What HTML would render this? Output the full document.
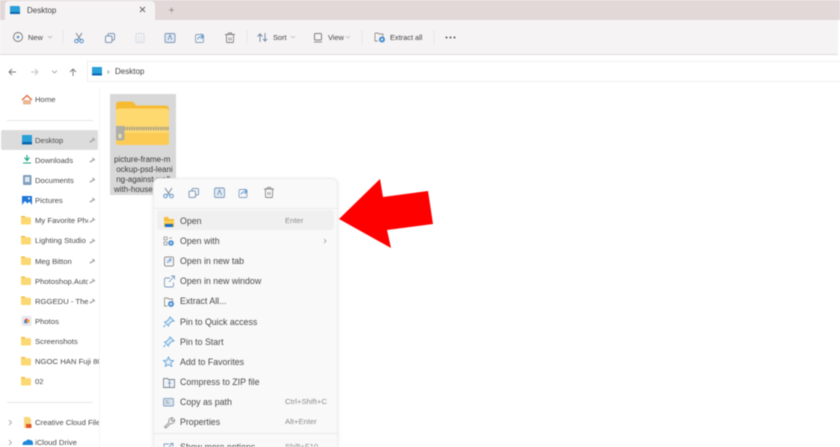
<!DOCTYPE html>
<html><head><meta charset="utf-8"><style>
html,body{margin:0;padding:0;width:840px;height:447px;overflow:hidden;background:#fff}
#w{position:relative;width:840px;height:447px;overflow:hidden;font-family:"Liberation Sans",sans-serif;color:#3a3a3a;filter:blur(.6px)}
.a{position:absolute}
.t{position:absolute;font-size:8.4px;line-height:12px;white-space:nowrap;color:#444}
.s{position:absolute;left:35px;width:53px;overflow:hidden;font-size:7.7px;line-height:12px;white-space:nowrap;color:#4a4a4a}
.m{position:absolute;left:180px;font-size:8.8px;line-height:12px;white-space:nowrap;color:#4a4a4a}
.k{position:absolute;font-size:7.7px;line-height:12px;white-space:nowrap;color:#8c8c8c}
svg{position:absolute;left:0;top:0}
</style></head><body><div id="w">
<div class="a" style="left:0;top:0;width:840px;height:20px;background:#e2d8d8"></div>
<div class="a" style="left:5px;top:1px;width:150px;height:20px;background:#f5f3f3;border-radius:4px 4px 0 0"></div>
<div class="a" style="left:0;top:20px;width:838px;height:34px;background:#f5f3f4;border-bottom:1px solid #e0dede"></div>
<div class="a" style="left:87px;top:61px;width:753px;height:21px;background:#fff;border-top:1px solid #eee;border-bottom:1px solid #eee;border-left:1px solid #eee;box-sizing:border-box"></div>
<div class="a" style="left:99px;top:88px;width:1px;height:359px;background:#f6f6f6"></div>
<div class="a" style="left:1px;top:130px;width:97px;height:20px;background:#dcdcdc;border-radius:2px"></div>
<div class="a" style="left:7px;top:120px;width:86px;height:1px;background:#e6e6e6"></div>
<div class="a" style="left:7px;top:402px;width:86px;height:1px;background:#e6e6e6"></div>
<div class="a" style="left:110px;top:94px;width:66px;height:101px;background:#d8d8d8"></div>

<div class="t" style="left:27px;top:5px;font-size:8px">Desktop</div>
<div class="t" style="left:28px;top:32px;font-size:7.4px">New</div>
<div class="t" style="left:273px;top:32px;font-size:7.4px">Sort</div>
<div class="t" style="left:328px;top:32px;font-size:7.4px">View</div>
<div class="t" style="left:390px;top:32px;font-size:7.4px">Extract all</div>
<div class="t" style="left:115px;top:66px;font-size:8px">Desktop</div>

<div class="s" style="top:94px">Home</div>
<div class="s" style="top:135px">Desktop</div>
<div class="s" style="top:155px">Downloads</div>
<div class="s" style="top:175px">Documents</div>
<div class="s" style="top:195px">Pictures</div>
<div class="s" style="top:215px">My Favorite Pho</div>
<div class="s" style="top:235px">Lighting Studio</div>
<div class="s" style="top:256px">Meg Bitton</div>
<div class="s" style="top:276px">Photoshop.Autc</div>
<div class="s" style="top:296px">RGGEDU - The N</div>
<div class="s" style="top:316px">Photos</div>
<div class="s" style="top:336px">Screenshots</div>
<div class="s" style="top:356px;width:64px">NGOC HAN Fuji 80</div>
<div class="s" style="top:376px">02</div>
<div class="s" style="top:417px;width:64px">Creative Cloud Files</div>
<div class="s" style="top:437px">iCloud Drive</div>

<div class="a" style="left:114px;top:155px;width:62px;font-size:8px;line-height:10px;color:#3a3a3a;white-space:nowrap">picture-frame-m<br>&nbsp;ockup-psd-leani<br>&nbsp;ng-against-wall<br>with-house-wall</div>

<svg width="840" height="447" viewBox="0 0 840 447" fill="none">
<defs>
<g id="pin"><path d="M-1.500 1.500L.5-.5M-.5-2L1.800.3M-1.700 .8L-3 2.300" stroke="#9a9a9a" stroke-width="1.200"/></g>
<g id="fold"><path d="M0 1Q0 0 1 0H3.500L4.800 1.300H9Q10 1.300 10 2.300V7.500Q10 8.500 9 8.500H1Q0 8.500 0 7.500Z" fill="#fcd873"/><path d="M0 1Q0 0 1 0H3.500L4.800 1.300H0Z" fill="#efb73a"/></g>
</defs>
<path d="M10 6h9l1 1v6H10z" fill="#2a9fd8"/><path d="M10 12h10v2H10z" fill="#0b66b0"/>
<path d="M140 7l5 5M145 7l-5 5" stroke="#666" stroke-width=".9"/>
<path d="M171.500 7.500v5M169 10h5" stroke="#888" stroke-width=".8"/>
<g opacity=".8">
<circle cx="18" cy="37" r="4.500" stroke="#555" stroke-width=".9"/><circle cx="18" cy="37" r="1.300" fill="#2c78c4"/>
<path d="M48 36l2 2 2-2" stroke="#999" stroke-width=".7"/>
<path d="M76 33l5 7.500M82 33l-5 7.500" stroke="#5b6b7c" stroke-width="1"/><circle cx="76.500" cy="41" r="1.800" stroke="#2c78c4"/><circle cx="81.500" cy="41" r="1.800" stroke="#2c78c4"/>
<rect x="108" y="33.500" width="6.500" height="6.500" rx="1.200" stroke="#5d7fa6"/><rect x="105.500" y="36" width="6.500" height="6.500" rx="1.200" fill="#f5f3f4" stroke="#5d7fa6"/>
<rect x="136" y="33.500" width="8" height="9" rx="1" stroke="#ccd4dc"/><rect x="138.500" y="36.500" width="3" height="4" stroke="#d5dce2" stroke-width=".7"/>
<rect x="165" y="33.500" width="10" height="9" rx="1.500" fill="#dbe6f2" stroke="#5d7fa6" stroke-width=".9"/><path d="M168 40l2-5 2 5" stroke="#3d6ea8" stroke-width=".8"/>
<rect x="195.500" y="34.500" width="8" height="8" rx="1.500" stroke="#6a8cb0" stroke-width=".9"/><path d="M197.500 39.500q1-3 5-3M201 34l2.500 2.500L201 39" stroke="#2c78c4" stroke-width=".9"/>
<path d="M225 34.500h10M226.500 35v6.500q0 1 1 1h5q1 0 1-1V35M228 34l.5-1h3l.5 1M229 37.500v3M231 37.500v3" stroke="#666" stroke-width=".9"/>
<path d="M260 42v-8l-2.500 2.500M260 34l2.500 2.500M265 33v8l-2 -2M265 41l2-2" stroke="#4e6c8c" stroke-width=".9"/>
<path d="M291 36l2 2 2-2M346 36l2 2 2-2" stroke="#aaa" stroke-width=".7"/>
<rect x="314.500" y="33.500" width="7" height="6.500" rx="1" stroke="#666"/><path d="M314 42h8" stroke="#777"/>
<path d="M375 33h3l1 1h4v3M375 33v8h3" stroke="#807a70" stroke-width=".9"/><circle cx="382" cy="39.500" r="3" fill="#1f77c8"/><circle cx="382" cy="39.500" r="1" fill="#fff"/>
</g>
<circle cx="446.500" cy="37.500" r="1" fill="#555"/><circle cx="450.500" cy="37.500" r="1" fill="#555"/><circle cx="454.500" cy="37.500" r="1" fill="#555"/>
<path d="M63 30v14M247 30v14M362 30v14M434 30v14" stroke="#e8e6e6"/>
<path d="M9 72h7M12 69l-3 3 3 3" stroke="#777" stroke-width=".9"/>
<path d="M31 72h7M35 69l3 3-3 3" stroke="#c4c4c4" stroke-width=".9"/>
<path d="M52 70.500l2.500 2.500 2.500-2.500" stroke="#999" stroke-width=".8"/>
<path d="M73 76v-7M70 72l3-3 3 3" stroke="#777" stroke-width=".9"/>
<path d="M92 67h10v8H92z" fill="#2a9fd8"/><path d="M92 73.500h10v2H92z" fill="#0b66b0"/>
<path d="M107.500 70.500l1.500 1.500-1.500 1.500" stroke="#777" stroke-width=".7"/>

<path d="M22 100l5-4.500 5 4.500" stroke="#d86b3a" stroke-width="1.300"/><path d="M23.500 100v4h7v-4" fill="#f2b58c" stroke="#c9a48c" stroke-width=".6"/>
<rect x="22" y="135" width="10" height="9" fill="#2a9fd8"/><rect x="22" y="142" width="10" height="2.500" fill="#0b66b0"/>
<path d="M27 155v5M24.500 157.500l2.500 3 2.500-3M23 163h8" stroke="#1aa184" stroke-width="1.100"/>
<rect x="23" y="175" width="8.500" height="10" rx="1" fill="#7f9fbe"/><rect x="25" y="177" width="4.500" height="5" fill="#dfe8f0"/>
<rect x="22" y="196" width="10" height="9" fill="#1f77d8"/><path d="M22 205l3-4 2.500 2.500 2-2 2.500 3.500z" fill="#fff"/><circle cx="29" cy="198.500" r="1" fill="#fff"/>
<use href="#fold" x="21" y="216"/><use href="#fold" x="21" y="236"/><use href="#fold" x="21" y="256.500"/><use href="#fold" x="21" y="276.500"/><use href="#fold" x="21" y="296.500"/><use href="#fold" x="21" y="337"/><use href="#fold" x="21" y="357"/><use href="#fold" x="21" y="377"/>
<rect x="21.500" y="316" width="10" height="10" rx="1.500" fill="#e8e8ee"/><circle cx="26.500" cy="321" r="2.200" fill="#e0357a"/><circle cx="28" cy="321" r="1.600" fill="#f2a81d"/><circle cx="25.500" cy="322" r="1.400" fill="#2d8de0"/>
<path d="M24 417h5l2 2v9h-7z" fill="#f8d67a"/><rect x="26" y="424" width="5.500" height="4" fill="#e0582a"/>
<path d="M22.500 445q0-4 3.500-4 1.500-2.500 4-1 3 0 3 3.500v1.500z" fill="#1f86d8"/>
<path d="M9 420l2.500 2.500L9 425M9 440l2.500 2.500L9 445" stroke="#999" stroke-width=".8"/>
<use href="#pin" x="93" y="140"/><use href="#pin" x="93" y="160"/><use href="#pin" x="93" y="180"/><use href="#pin" x="93" y="200"/><use href="#pin" x="93" y="220"/><use href="#pin" x="93" y="241"/><use href="#pin" x="93" y="261"/><use href="#pin" x="93" y="281"/><use href="#pin" x="93" y="301"/>

<path d="M116 105q0-3.500 3.500-3.500h11q3 0 4 2l1.500 2h29q4 0 4 4v30q0 4-4 4h-45q-4 0-4-4z" fill="#f6bb33"/>
<path d="M116 111q0-2.500 3-2.500h46.500q3.500 0 3.500 3v30.500q0 3-3 3h-47.500q-2.500 0-2.500-3z" fill="#fdd970"/>
<path d="M116 133h53v9q0 3-3 3h-47q-3 0-3-3z" fill="#fbcb54"/>
<path d="M124 128.500h45" stroke="#a39a88" stroke-width="3.500" stroke-dasharray="1.400 1"/>
<path d="M116 126h8.500v12.500q0 2-2 2h-4.500q-2 0-2-2z" fill="#aeaea6"/><rect x="118.500" y="134" width="3" height="4" fill="#eadfa6"/>
</svg>

<div class="a" style="left:153px;top:178px;width:185px;height:280px;background:#f9f9f9;border:1px solid #ececec;border-radius:6px;box-sizing:border-box;box-shadow:0 1px 5px rgba(0,0,0,.07)"></div>
<div class="a" style="left:153px;top:208px;width:185px;height:1px;background:#ebebeb"></div>
<div class="a" style="left:157px;top:210px;width:177px;height:20px;background:#f0f0f0;border-radius:3px"></div>
<div class="a" style="left:153px;top:433px;width:185px;height:1px;background:#e8e8e8"></div>

<div class="m" style="top:215px">Open</div><div class="k" style="left:285px;top:215px">Enter</div>
<div class="m" style="top:235px">Open with</div>
<div class="m" style="top:255px">Open in new tab</div>
<div class="m" style="top:275px">Open in new window</div>
<div class="m" style="top:295px">Extract All...</div>
<div class="m" style="top:316px">Pin to Quick access</div>
<div class="m" style="top:336px">Pin to Start</div>
<div class="m" style="top:356px">Add to Favorites</div>
<div class="m" style="top:376px">Compress to ZIP file</div>
<div class="m" style="top:396px">Copy as path</div><div class="k" style="left:285px;top:396px">Ctrl+Shift+C</div>
<div class="m" style="top:416px">Properties</div><div class="k" style="left:285px;top:416px">Alt+Enter</div>
<div class="m" style="top:441px">Show more options</div><div class="k" style="left:285px;top:441px">Shift+F10</div>

<svg width="840" height="447" viewBox="0 0 840 447" fill="none">
<g opacity=".78">
<path d="M165 188l5 7.500M172 188l-5 7.500" stroke="#5b6b7c"/><circle cx="165.500" cy="196" r="1.800" stroke="#2c78c4"/><circle cx="171.500" cy="196" r="1.800" stroke="#2c78c4"/>
<rect x="192" y="188.500" width="6.500" height="6.500" rx="1.200" stroke="#5d7fa6"/><rect x="189" y="191" width="6.500" height="6.500" rx="1.200" fill="#f9f9f9" stroke="#5d7fa6"/>
<rect x="214.500" y="188" width="10" height="9.500" rx="1.500" fill="#dbe6f2" stroke="#5d7fa6" stroke-width=".9"/><path d="M217.500 195l2-5 2 5" stroke="#3d6ea8" stroke-width=".8"/>
<rect x="239" y="189.500" width="8" height="8" rx="1.500" stroke="#6a8cb0" stroke-width=".9"/><path d="M241 194.500q1-3 5-3M244.500 189l2.500 2.500-2.500 2.500" stroke="#2c78c4" stroke-width=".9"/>
<path d="M264 189h10M265.500 189.500V196q0 1.500 1 1.500h5q1 0 1-1.500v-6.500M267 188.500l.5-1h3l.5 1M268 192v3M270 192v3" stroke="#666" stroke-width=".9"/>
</g>
<path d="M164 217h4l1 2h5v8h-10z" fill="#f6bd3a"/><path d="M164 221h10v2h-10z" fill="#fbd25f"/><rect x="165" y="224" width="8" height="3" fill="#1b6fc4"/>
<g opacity=".8">
<path d="M164 237h3v3h-3zM164 242h3v3h-3zM169 238h3M169 243h1" stroke="#777" stroke-width=".8"/><circle cx="171" cy="243" r="2.800" fill="#1f77c8"/><circle cx="171" cy="243" r=".9" fill="#fff"/>
<path d="M324 239l2 2-2 2" stroke="#888" stroke-width=".8"/>
<rect x="164.500" y="257" width="9" height="9" rx="1.500" stroke="#777"/><rect x="166.500" y="259" width="5" height="4" fill="#cfdcea"/><path d="M167 263l4-4M169 259h2v2" stroke="#2c78c4" stroke-width=".7"/>
<path d="M170 278h-4q-1.500 0-1.500 1.500v6q0 1.500 1.500 1.500h6q1.500 0 1.500-1.500v-3M169 282l5-5.500M171 276h3.500v3.500" stroke="#5f87ad" stroke-width=".9"/>
<path d="M164.500 298h3l1 1h4v3M164.500 298v8h3" stroke="#807a70" stroke-width=".9"/><circle cx="171" cy="304" r="3" fill="#1f77c8"/><circle cx="171" cy="304" r="1" fill="#fff"/>
<g stroke="#3e8fd0" stroke-width=".9" fill="#dce9f5"><path d="M170 317l4 4-2.500 .5-2.500 2.500-.5 2-4-4 2-.5 2.500-2.500z"/><path d="M165.500 325l-2 2" fill="none"/></g>
<g stroke="#3e8fd0" stroke-width=".9" fill="#dce9f5" transform="translate(0 20)"><path d="M170 317l4 4-2.500 .5-2.500 2.500-.5 2-4-4 2-.5 2.500-2.500z"/><path d="M165.500 325l-2 2" fill="none"/></g>
<path d="M168.500 357l1.500 3.200 3.500 .4-2.600 2.300.8 3.500-3.200-1.800-3.200 1.800.8-3.500-2.600-2.300 3.500-.4z" fill="#e3eef8" stroke="#3e8fd0" stroke-width=".9"/>
<path d="M163.500 378.500h4l1 1h6v8h-11z" fill="#eef1f4" stroke="#5f6b78" stroke-width=".9"/><path d="M169.500 380v7M171 383h-3" stroke="#3d6ea8" stroke-width=".8"/>
<rect x="163.500" y="398.500" width="10" height="7.500" rx="1" fill="#cfdcea" stroke="#6a8cb0" stroke-width=".9"/><path d="M165.500 401h3M165.500 403h4" stroke="#5a7da0" stroke-width=".7"/>
<path d="M164.500 427l4.500-4.500q-1-3 1.500-4.500 1.500-.5 2.500 0l-2 2 1.500 1.500 2-2q.5 3-2 4-1.500.5-2 0l-4.500 4.500z" stroke="#777" stroke-width=".9"/>
<path d="M164 444h5M164 444v6M168 448l4-4M170 443.500h3v3" stroke="#5f87ad" stroke-width=".9"/>
</g>
<polygon points="339,219 380,179 383,197 428,191 433,224 387,230 391,248" fill="#fe0000"/>
</svg>
</div></body></html>
